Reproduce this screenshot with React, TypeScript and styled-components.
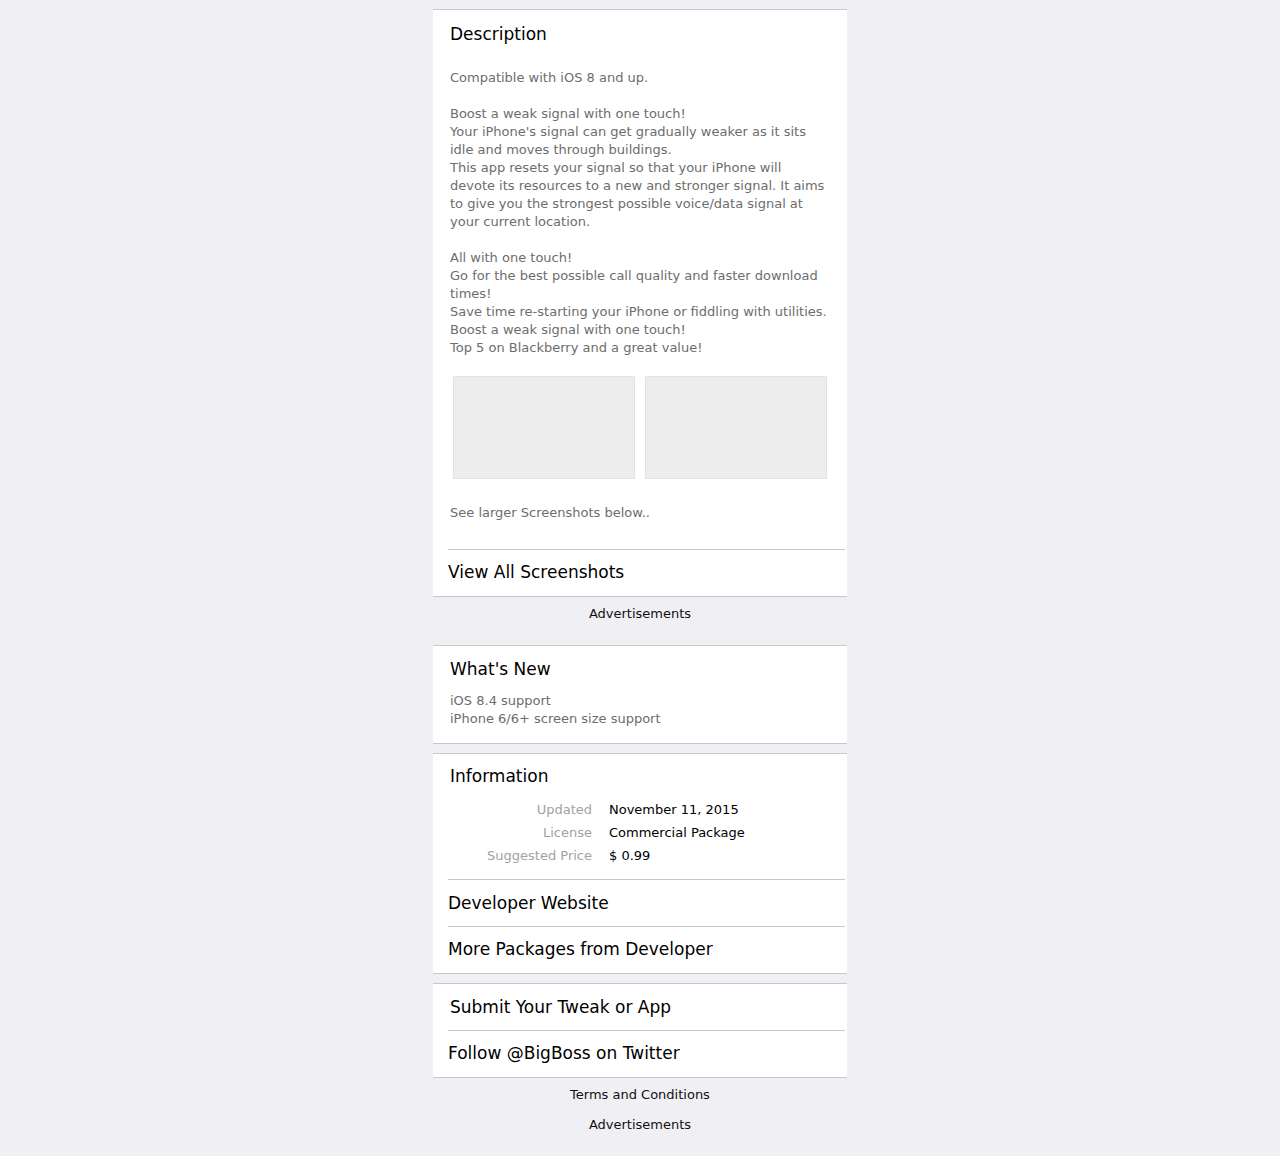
import React from "react";
import styled, { createGlobalStyle } from "styled-components";

const Global = createGlobalStyle`
  html, body {
    margin: 0;
    padding: 0;
    background: #efeff4;
    font-family: "DejaVu Sans", "Liberation Sans", sans-serif;
  }
`;

const Page = styled.div`
  width: 414px;
  margin: 0 auto;
  padding-top: 9px;
  padding-bottom: 20px;
`;

const Card = styled.section<{ $gap?: number }>`
  background: #fff;
  border-top: 1px solid #c8c7cc;
  border-bottom: 1px solid #c8c7cc;
  margin-top: ${(p) => p.$gap ?? 0}px;
`;

const Body = styled.div<{ $top: number; $bottom: number }>`
  padding: ${(p) => p.$top}px 17px ${(p) => p.$bottom}px;
`;

const Heading = styled.h2`
  margin: 0;
  font-size: 17px;
  font-weight: normal;
  line-height: 22px;
  color: #000;
`;

const Text = styled.div<{ $top: number }>`
  margin-top: ${(p) => p.$top}px;
  font-size: 13px;
  line-height: 18px;
  color: #6d6d6d;
  white-space: pre-line;
`;

const Shots = styled.div`
  display: grid;
  grid-template-columns: 182px 182px;
  column-gap: 10px;
  padding: 0 3px;
  margin-top: 19px;
`;

const Shot = styled.div`
  height: 103px;
  box-sizing: border-box;
  background: #ededed;
  border: 1px solid #e2e2e2;
`;

const LinkList = styled.div`
  margin: 0 2px 0 15px;
`;

const LinkRow = styled.a<{ $first?: boolean; $indent?: number; $low?: boolean }>`
  display: block;
  border-top: ${(p) => (p.$first ? "none" : "1px solid #c8c7cc")};
  padding: ${(p) => (p.$low ? "12px 0 12px" : "11px 0 13px")};
  padding-left: ${(p) => p.$indent ?? 0}px;
  font-size: 17px;
  line-height: 22px;
  color: #000;
  text-decoration: none;
`;

const InfoGrid = styled.div`
  display: grid;
  grid-template-columns: 142px 1fr;
  column-gap: 17px;
  margin-top: 11px;
  font-size: 13px;
  line-height: 23px;
`;

const Label = styled.div`
  text-align: right;
  color: #a2a2a2;
`;

const Value = styled.div`
  color: #000;
`;

const Note = styled.div<{ $top: number; $bottom: number }>`
  text-align: center;
  font-size: 13px;
  line-height: 18px;
  color: #111;
  padding-top: ${(p) => p.$top}px;
  padding-bottom: ${(p) => p.$bottom}px;
`;

const description = `Compatible with iOS 8 and up.

Boost a weak signal with one touch!
Your iPhone's signal can get gradually weaker as it sits idle and moves through buildings.
This app resets your signal so that your iPhone will devote its resources to a new and stronger signal. It aims to give you the strongest possible voice/data signal at your current location.

All with one touch!
Go for the best possible call quality and faster download times!
Save time re-starting your iPhone or fiddling with utilities.
Boost a weak signal with one touch!
Top 5 on Blackberry and a great value!`;

const info: [string, string][] = [
  ["Updated", "November 11, 2015"],
  ["License", "Commercial Package"],
  ["Suggested Price", "$ 0.99"],
];

export default function App() {
  return (
    <>
      <Global />
      <Page>
        <Card>
          <Body $top={13} $bottom={27}>
            <Heading>Description</Heading>
            <Text $top={24}>{description}</Text>
            <Shots>
              <Shot />
              <Shot />
            </Shots>
            <Text $top={25}>See larger Screenshots below..</Text>
          </Body>
          <LinkList>
            <LinkRow href="#">View All Screenshots</LinkRow>
          </LinkList>
        </Card>
        <Note $top={8} $bottom={22}>Advertisements</Note>
        <Card>
          <Body $top={12} $bottom={15}>
            <Heading>What's New</Heading>
            <Text $top={12}>{"iOS 8.4 support\niPhone 6/6+ screen size support"}</Text>
          </Body>
        </Card>
        <Card $gap={9}>
          <Body $top={11} $bottom={12}>
            <Heading>Information</Heading>
            <InfoGrid>
              {info.map(([k, v]) => (
                <React.Fragment key={k}>
                  <Label>{k}</Label>
                  <Value>{v}</Value>
                </React.Fragment>
              ))}
            </InfoGrid>
          </Body>
          <LinkList>
            <LinkRow href="#" $low>Developer Website</LinkRow>
            <LinkRow href="#">More Packages from Developer</LinkRow>
          </LinkList>
        </Card>
        <Card $gap={9}>
          <LinkList>
            <LinkRow href="#" $first $low $indent={2}>Submit Your Tweak or App</LinkRow>
            <LinkRow href="#">Follow @BigBoss on Twitter</LinkRow>
          </LinkList>
        </Card>
        <Note $top={8} $bottom={12}>Terms and Conditions</Note>
        <Note $top={0} $bottom={0}>Advertisements</Note>
      </Page>
    </>
  );
}
